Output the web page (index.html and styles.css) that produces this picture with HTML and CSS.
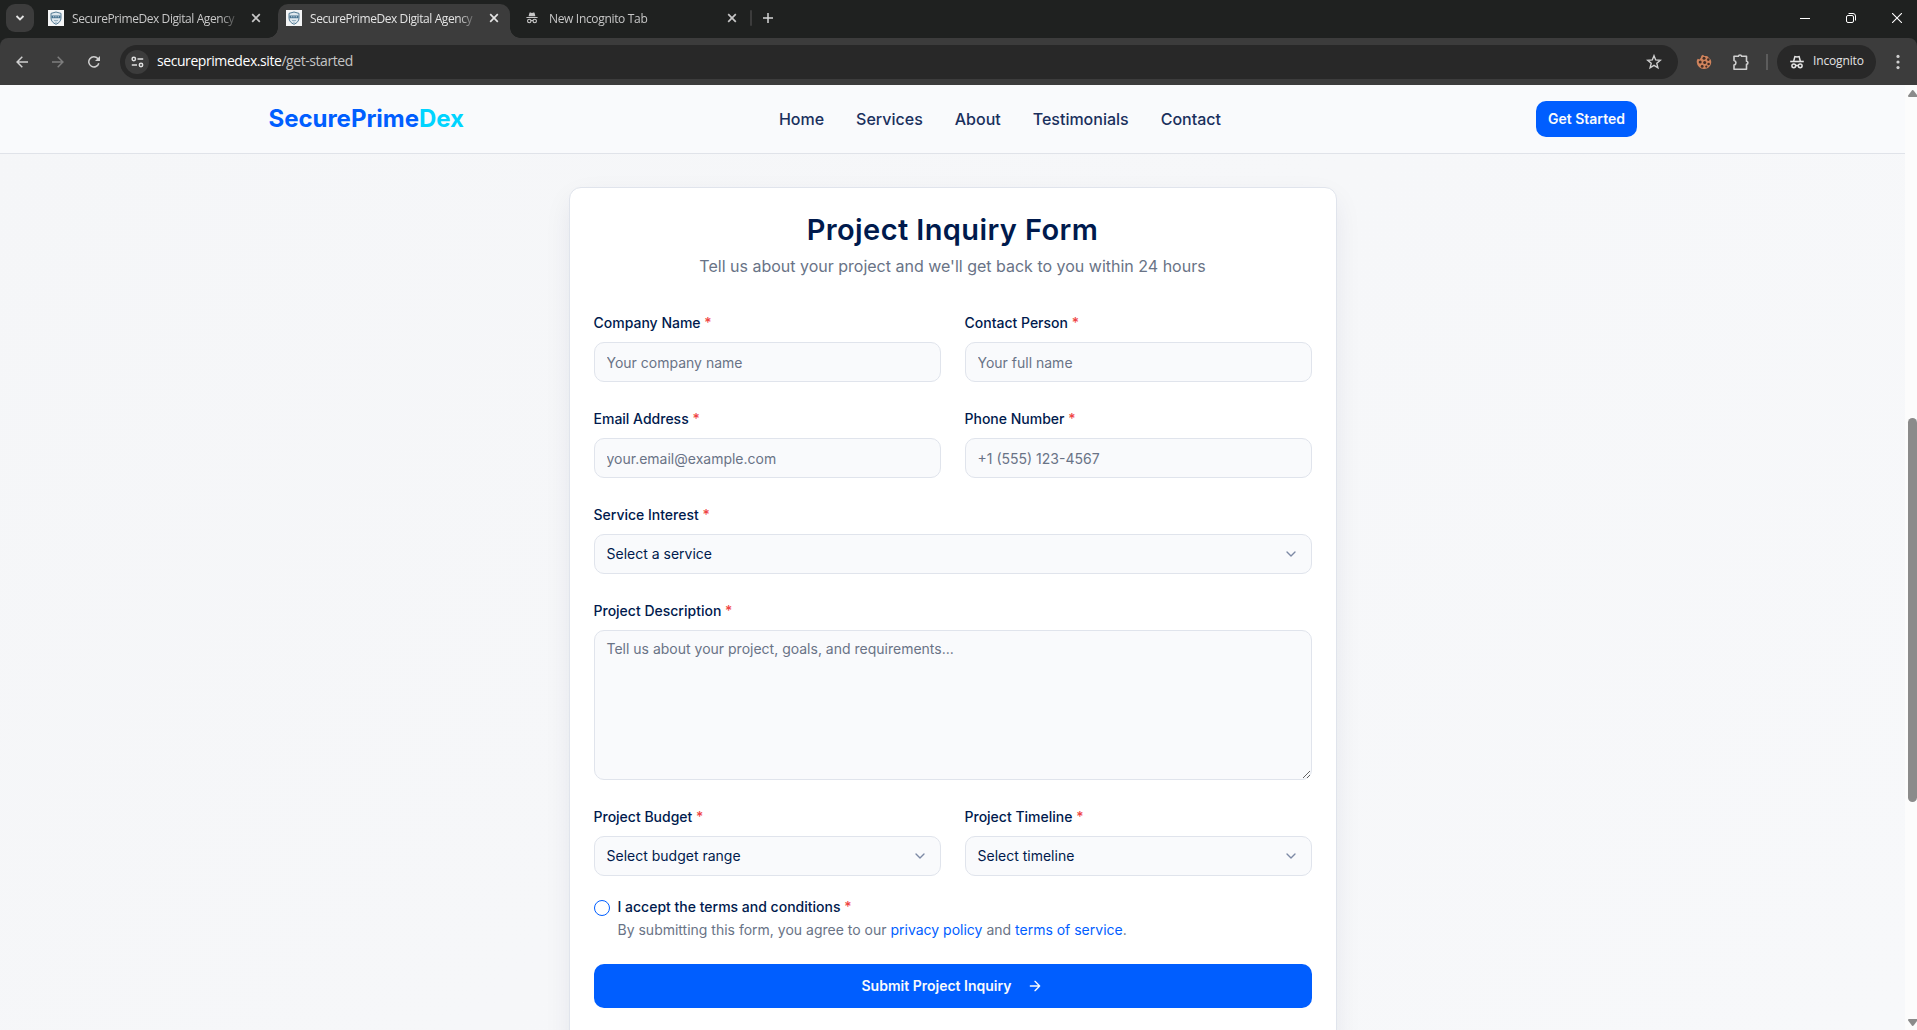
FILE: index.html
```html
<!DOCTYPE html>
<html lang="en">
<head>
<meta charset="utf-8">
<title>SecurePrimeDex Digital Agency</title>
<link rel="stylesheet" href="styles.css">
</head>
<body>
<svg width="0" height="0" class="defs">
  <symbol id="x" viewBox="0 0 10 10"><path d="M1.2 1.2l7.6 7.6M8.8 1.2L1.2 8.8" fill="none" stroke="currentColor" stroke-width="1.7"/></symbol>
  <symbol id="shield" viewBox="0 0 16 16"><path fill="#f4f5f6" d="M0 0h16v16H0z"/><path d="M8 2l5 1.400v4.600c0 3-2 5-5 6.300C5 13 3 11 3 8V3.400z" fill="#dfe8ee" stroke="#527a94" stroke-width="1"/><path d="M3.500 5.500h9v2.700h-9z" fill="#44708e"/><path d="M5 6.800h1.300M7.300 6.800h1.300M9.700 6.800H11" stroke="#c9d9e3"/><path d="M6 10.500h4M7.200 12.200h1.600" stroke="#85a3b7" stroke-width=".8"/></symbol>
  <symbol id="incognito" viewBox="0 0 14 14"><path fill="currentColor" d="M4 1.200C4.200.6 4.800.6 5.200.7L7 1.200 8.800.7c.5-.1 1 0 1.200.5L11 5H3zM.5 5.800h13v1.300H.5z"/><g fill="none" stroke="currentColor" stroke-width="1.300"><circle cx="3.800" cy="10.500" r="2"/><circle cx="10.200" cy="10.500" r="2"/><path d="M5.800 10.200c.8-.5 1.600-.5 2.400 0"/></g></symbol>
  <symbol id="incognito-line" viewBox="0 0 14 14"><path fill="none" stroke="currentColor" stroke-width="1.500" d="M3.700 6L4.900 1.500l2.100.4 2.100-.4L10.300 6"/><path d="M.2 6.500h13.600" stroke="currentColor" stroke-width="1.600"/><g fill="none" stroke="currentColor" stroke-width="1.500"><circle cx="3.800" cy="10.800" r="1.900"/><circle cx="10.200" cy="10.800" r="1.900"/><path d="M5.600 10.500h2.800"/></g></symbol>
  <symbol id="chevron" viewBox="0 0 24 24"><path d="m6 9 6 6 6-6" fill="none" stroke="currentColor" stroke-width="2" stroke-linecap="round" stroke-linejoin="round"/></symbol>
</svg>

<div class="tabstrip">
  <button class="tab-search"><svg width="10" height="10" viewBox="0 0 10 10"><path d="M1.500 3L5 6.500 8.500 3" fill="none" stroke="#e3e3e3" stroke-width="1.800"/></svg></button>
  <div class="tab tab-first"><svg class="favicon"><use href="#shield"/></svg><span class="tab-title">SecurePrimeDex Digital Agency</span><svg class="tab-close"><use href="#x"/></svg></div>
  <div class="tab tab-active"><svg class="favicon"><use href="#shield"/></svg><span class="tab-title">SecurePrimeDex Digital Agency</span><svg class="tab-close"><use href="#x"/></svg></div>
  <div class="tab tab-new"><svg class="favicon-small"><use href="#incognito"/></svg><span class="tab-title">New Incognito Tab</span><svg class="tab-close"><use href="#x"/></svg></div>
  <span class="tab-divider"></span>
  <svg class="plus" width="12" height="12" viewBox="0 0 12 12"><path d="M6 1v10M1 6h10" stroke="#d5d5d5" stroke-width="1.500"/></svg>
  <div class="window-controls">
    <svg width="10" height="10" viewBox="0 0 10 10"><path d="M0 5.500h10" stroke="#fff"/></svg>
    <svg width="10" height="10" viewBox="0 0 10 10"><path d="M2.500.5H7A2.500 2.500 0 0 1 9.500 3v4.500" fill="none" stroke="#fff"/><rect x=".5" y="2.500" width="7" height="7" rx="1.500" fill="none" stroke="#fff"/></svg>
    <svg width="10" height="10" viewBox="0 0 10 10"><path d="M0 0l10 10M10 0L0 10" stroke="#fff" stroke-width="1.100"/></svg>
  </div>
</div>

<div class="toolbar-backdrop">
<div class="toolbar">
  <div class="nav-icons">
    <svg width="12" height="12" viewBox="0 0 12 12"><path d="M12 6H1.200M6.300.8L1.100 6l5.200 5.200" fill="none" stroke="#cfcfcf" stroke-width="1.500"/></svg>
    <svg width="12" height="12" viewBox="0 0 12 12"><path d="M0 6h10.800M5.700.8L10.900 6l-5.200 5.200" fill="none" stroke="#7d7d7d" stroke-width="1.500"/></svg>
    <svg width="12" height="12" viewBox="0 0 12 12"><path d="M10.800 7.200A5.100 5.100 0 1 1 9.800 2.600L11 4" fill="none" stroke="#cfcfcf" stroke-width="1.500"/><path d="M12 0v5H7z" fill="#cfcfcf"/></svg>
  </div>
  <div class="omnibox">
    <span class="site-info"><svg width="13" height="12" viewBox="0 0 13 12"><g fill="none" stroke="#e0e0e0" stroke-width="1.500"><circle cx="2.800" cy="3" r="1.700"/><path d="M6.500 3h5.700M.8 9h5.200"/><circle cx="10" cy="9" r="1.700"/></g></svg></span>
    <span class="url"><span class="host">secureprimedex.site</span><span class="path">/get-started</span></span>
    <svg class="star" width="16" height="16" viewBox="0 0 16 16"><path d="M8 1.700l1.700 4.200 4.600.4-3.500 3 1.100 4.500L8 11.400l-3.900 2.400 1.100-4.500-3.500-3 4.600-.4z" fill="none" stroke="#cfcfcf" stroke-width="1.400"/></svg>
  </div>
  <svg class="cookie" width="16" height="16" viewBox="0 0 16 16"><path d="M7 .8c.6 1 1.800 1.500 3 1.200 1.400-.2 2.200.7 2.600 1.800 2 1 2.900 2.900 2.600 5-.5 3.800-3.600 6.400-7.400 6.200A7.200 7.200 0 0 1 .8 8.400c-.3-1.200.2-2.600 1-3.600l1.700.8 1.300-1.800.6-2z" fill="#cf835c"/><g fill="#402d26"><circle cx="8" cy="4.200" r="1.500"/><circle cx="12.300" cy="5.600" r="1.300"/><circle cx="4.200" cy="8" r="1.500"/><circle cx="8.700" cy="8.500" r="1.500"/><circle cx="12.600" cy="10" r="1.300"/><circle cx="6.200" cy="12.400" r="1.400"/><circle cx="10.300" cy="12.600" r="1.100"/></g></svg>
  <svg class="puzzle" width="18" height="18" viewBox="0 0 18 18"><path d="M2 3.300h4.400c.2-1.700 3-1.700 3.200 0h4.900v4.900c1.900.2 1.900 3 0 3.200v4.900H2v-4.200c2.600-.5 2.600-4.100 0-4.600z" fill="none" stroke="#cfcfcf" stroke-width="1.600" stroke-linejoin="round"/></svg>
  <span class="toolbar-divider"></span>
  <div class="incognito"><svg width="14" height="14"><use href="#incognito-line"/></svg><span>Incognito</span></div>
  <svg class="dots" width="4" height="16" viewBox="0 0 4 16" fill="#cfcfcf"><circle cx="2" cy="2.400" r="1.600"/><circle cx="2" cy="8" r="1.600"/><circle cx="2" cy="13.600" r="1.600"/></svg>
</div>
</div>

<div class="viewport">
  <div class="page">
    <header class="site-header">
      <div class="container">
        <a class="logo">SecurePrime<span>Dex</span></a>
        <nav><a>Home</a><a>Services</a><a>About</a><a>Testimonials</a><a>Contact</a></nav>
        <button class="btn btn-header">Get Started</button>
      </div>
    </header>
    <main>
      <form class="card">
        <h1>Project Inquiry Form</h1>
        <p class="subtitle">Tell us about your project and we'll get back to you within 24 hours</p>
        <div class="fields">
          <div class="field"><div class="label"><label>Company Name <i>*</i></label></div><input class="control" placeholder="Your company name"></div>
          <div class="field"><div class="label"><label>Contact Person <i>*</i></label></div><input class="control" placeholder="Your full name"></div>
          <div class="field"><div class="label"><label>Email Address <i>*</i></label></div><input class="control" placeholder="your.email@example.com"></div>
          <div class="field"><div class="label"><label>Phone Number <i>*</i></label></div><input class="control" placeholder="+1 (555) 123-4567"></div>
          <div class="field wide"><div class="label"><label>Service Interest <i>*</i></label></div><div class="control select"><span>Select a service</span><svg><use href="#chevron"/></svg></div></div>
          <div class="field wide"><div class="label"><label>Project Description <i>*</i></label></div><textarea class="control" placeholder="Tell us about your project, goals, and requirements..."></textarea></div>
          <div class="field"><div class="label"><label>Project Budget <i>*</i></label></div><div class="control select"><span>Select budget range</span><svg><use href="#chevron"/></svg></div></div>
          <div class="field"><div class="label"><label>Project Timeline <i>*</i></label></div><div class="control select"><span>Select timeline</span><svg><use href="#chevron"/></svg></div></div>
        </div>
        <div class="terms">
          <span class="check"></span>
          <div>
            <label>I accept the terms and conditions <i>*</i></label>
            <p>By submitting this form, you agree to our <a>privacy policy</a> and <a>terms of service</a>.</p>
          </div>
        </div>
        <button class="btn btn-submit" type="button">Submit Project Inquiry<svg width="16" height="16" viewBox="0 0 24 24" fill="none" stroke="currentColor" stroke-width="2" stroke-linecap="round" stroke-linejoin="round"><path d="M5 12h14M12 5l7 7-7 7"/></svg></button>
      </form>
    </main>
  </div>
  <div class="scrollbar">
    <svg width="9" height="7" viewBox="0 0 9 7"><path d="M4.500 0Q5.300 0 6 1l3 4v2H1Q0 7 0 6q0-.5.500-1l3-4q.500-1 1-1z" fill="#8b8b8b"/></svg>
    <div class="thumb"></div>
    <svg class="arrow-down" width="9" height="7" viewBox="0 0 9 7"><path d="M4.500 7Q5.300 7 6 6l3-4V0H1Q0 0 0 1q0 .5.500 1l3 4q.500 1 1 1z" fill="#8b8b8b"/></svg>
  </div>
</div>
</body>
</html>
```
FILE: styles.css
```css
* { box-sizing: border-box; }
body { margin: 0; width: 1917px; height: 1030px; overflow: hidden; display: flex; flex-direction: column; font-family: Inter, sans-serif; color: #001a4d; }
svg { display: block; flex: none; }
.defs { position: absolute; }
button { border: 0; font: inherit; padding: 0; }
i { font-style: normal; color: #ef4444; }

/* browser chrome */
.tabstrip { height: 38px; flex: none; background: #1f2120; display: flex; align-items: flex-start; padding-left: 6px; font-family: "Open Sans", sans-serif; font-size: 12px; }
.tab-search { width: 28px; height: 28px; margin-top: 4px; border-radius: 9px; background: #3c3c3c; display: flex; align-items: center; justify-content: center; }
.tab { height: 34px; margin-top: 4px; padding: 0 11px 6px 8px; display: flex; align-items: center; width: 232px; color: #c7c7c7; }
.tab-first { margin-left: 6px; width: 238px; padding-right: 17px; }
.tab-active { background: #3c3c3c; color: #e3e3e3; border-radius: 10px 10px 0 0; position: relative; }
.tab-active::before, .tab-active::after { content: ""; position: absolute; bottom: 0; width: 10px; height: 10px; }
.tab-active::before { left: -10px; background: radial-gradient(circle at 0 0, transparent 9.5px, #3c3c3c 10px); }
.tab-active::after { right: -10px; background: radial-gradient(circle at 100% 0, transparent 9.5px, #3c3c3c 10px); }
.tab-new { padding-left: 16px; padding-right: 5px; }
.favicon { width: 16px; height: 16px; margin-right: 8px; }
.favicon-small { width: 12px; height: 12px; margin-right: 11px; }
.tab-title { flex: 1; overflow: hidden; white-space: nowrap; letter-spacing: -0.42px; margin-right: 9px; -webkit-mask: linear-gradient(90deg, #000 calc(100% - 22px), transparent calc(100% - 2px)); mask: linear-gradient(90deg, #000 calc(100% - 22px), transparent calc(100% - 2px)); }
.tab-new .tab-title { letter-spacing: -0.33px; }
.tab-close { width: 10px; height: 10px; }
.tab-divider { width: 2px; height: 16px; margin: 10px 0 0 8px; background: #3c3c3c; border-radius: 1px; }
.plus { margin: 12px 0 0 10px; }
.window-controls { margin-left: auto; padding: 13px 15px 0 0; display: flex; gap: 36px; }
.toolbar-backdrop { background: #1f2120; flex: none; }
.toolbar { height: 47px; background: #3c3c3c; border-radius: 8px 8px 0 0; display: flex; align-items: center; font-family: "Open Sans", sans-serif; }
.nav-icons { display: flex; gap: 24px; padding: 0 20px 0 16px; }
.omnibox { width: 1558px; height: 34px; border-radius: 17px; background: #282828; display: flex; align-items: center; padding: 0 16px 0 5px; }
.site-info { width: 24px; height: 24px; border-radius: 50%; background: #3c3c3c; display: flex; align-items: center; justify-content: center; }
.url { margin: 0 0 2px 8px; font-size: 14px; letter-spacing: -0.43px; color: #c4c4c4; }
.host { color: #fff; }
.star { margin-left: auto; }
.cookie { margin-left: 18px; }
.puzzle { margin-left: 20px; }
.toolbar-divider { width: 2px; height: 16px; margin: 0 9px 0 16px; background: #5c5c5c; }
.incognito { width: 99px; height: 34px; border-radius: 17px; background: #282828; display: flex; align-items: center; gap: 9px; padding-left: 13px; color: #e3e3e3; font-size: 12px; letter-spacing: -0.15px; }
.incognito span { margin-bottom: 2px; }
.dots { margin-left: 20px; }

/* page */
.viewport { flex: 1; min-height: 0; display: flex; }
.page { width: 1905px; overflow: hidden; background: linear-gradient(135deg, #f5f6f8, #f7f8fa); }
.site-header { height: 69px; background: #f9fafc; border-bottom: 1px solid #e0e3e9; }
.container { width: 1400px; height: 68px; margin: 0 auto; padding: 0 15.5px 0 16px; display: flex; align-items: center; justify-content: space-between; }
.logo { font-size: 24px; line-height: 32px; font-weight: 700; color: #005eff; letter-spacing: -0.03px; }
.logo span { color: #00d4ff; }
nav { display: flex; gap: 32px; font-size: 16px; font-weight: 500; color: #1a305d; line-height: 24px; }
.btn { background: #005eff; color: #f9fafc; border-radius: 10px; font-size: 14px; line-height: 20px; font-weight: 600; display: flex; align-items: center; justify-content: center; }
.btn-header { height: 36px; padding: 0 12px; }
.card { width: 768px; height: 900px; margin: 33px auto 0; padding: 24px; background: #fff; border: 1px solid #e0e4ec; border-radius: 12px; box-shadow: 0 10px 30px -5px rgba(0, 26, 77, 0.1); }
h1 { margin: 0; text-align: center; font-size: 29px; line-height: 35px; padding-bottom: 1px; font-weight: 600; letter-spacing: 0.4px; }
.subtitle { margin: 6px 0 32px; text-align: center; font-size: 16px; line-height: 24px; color: #697386; }
.fields { display: grid; grid-template-columns: 1fr 1fr; gap: 24px; }
.wide { grid-column: 1 / -1; }
.label { height: 32px; line-height: 24px; }
label { font-size: 14px; font-weight: 500; }
.control { display: block; width: 100%; height: 40px; padding: 8px 12px; border: 1px solid #e0e4ec; border-radius: 10px; background: #f9fafc; font: 400 14px/20px Inter, sans-serif; color: #001a4d; outline: 0; }
.control::placeholder { color: #697386; opacity: 1; }
textarea.control { height: 150px; resize: vertical; }
.select { display: flex; align-items: center; justify-content: space-between; }
.select svg { width: 16px; height: 16px; color: #7c89a5; }
.terms { margin-top: 24px; display: flex; gap: 8px; }
.check { width: 16px; height: 16px; border: 1px solid #005eff; border-radius: 50%; }
.terms label { display: block; line-height: 14px; }
.terms p { margin: 6px 0 0; font-size: 14px; line-height: 20px; color: #697386; }
.terms a { color: #005eff; }
.btn-submit { width: 100%; height: 44px; margin-top: 24px; gap: 16px; }
.scrollbar { width: 12px; background: #fcfcfc; padding: 5px 0 4px 3px; display: flex; flex-direction: column; }
.thumb { width: 9px; height: 384px; margin-top: 321px; border-radius: 4.5px; background: #8b8b8b; }
.arrow-down { margin-top: auto; }
```
